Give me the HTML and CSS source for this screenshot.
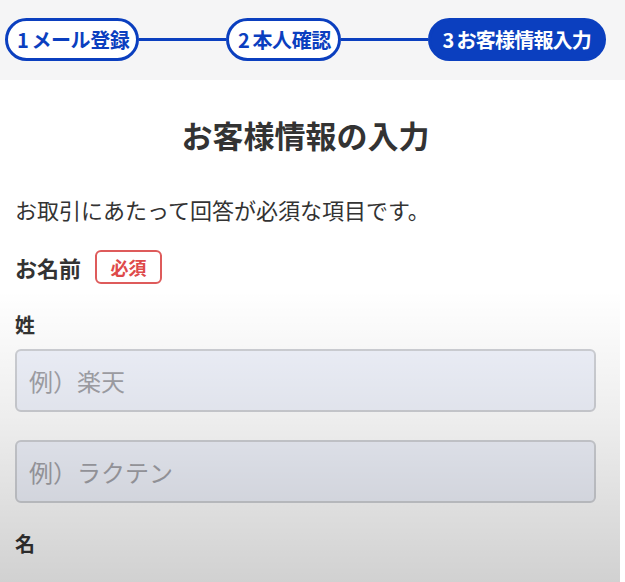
FILE: index.html
```html
<!DOCTYPE html>
<html lang="ja">
<head>
<meta charset="utf-8">
<link rel="stylesheet" href="styles.css">
</head>
<body>
<div class="page">
  <header class="steps">
    <div class="step"><span class="num">1</span>メール登録</div>
    <div class="line"></div>
    <div class="step"><span class="num">2</span>本人確認</div>
    <div class="line"></div>
    <div class="step active"><span class="num">3</span>お客様情報入力</div>
  </header>
  <main class="content">
    <h1 class="title">お客様情報の入力</h1>
    <p class="desc">お取引にあたって回答が必須な項目です。</p>
    <div class="group-head">
      <span class="group-label">お名前</span>
      <span class="badge">必須</span>
    </div>
    <div class="field-label">姓</div>
    <div class="input">例）楽天</div>
    <div class="input second">例）ラクテン</div>
    <div class="field-label last">名</div>
  </main>
  <div class="shade"></div>
</div>
</body>
</html>
```
FILE: styles.css
```css
* { box-sizing: border-box; }
html, body { margin: 0; padding: 0; }
body {
  width: 625px;
  height: 582px;
  overflow: hidden;
  background: #ffffff;
  font-family: "Noto Sans CJK JP", "Noto Sans", sans-serif;
  color: #333333;
}
.page { position: relative; height: 582px; overflow: hidden; }
.steps {
  height: 80px;
  background: #f5f5f6;
  display: flex;
  align-items: center;
  padding: 0 19px 2px 5px;
}
.step {
  height: 43px;
  border: 3px solid #0b3fbf;
  border-radius: 22px;
  background: #ffffff;
  color: #0b3fbf;
  font-weight: 700;
  font-size: 20px;
  line-height: 37px;
  padding: 0 7px 0 9px;
  white-space: nowrap;
  letter-spacing: -0.4px;
}
.num { margin-right: 3px; }
.step.active {
  background: #0b3fbf;
  color: #ffffff;
  padding: 0 12px;
  letter-spacing: -0.8px;
}
.line {
  flex: 1;
  height: 3px;
  background: #0b3fbf;
}
.content { padding: 0 29px 0 15px; }
.title {
  margin: 33px 0 0;
  text-align: center;
  font-size: 31px;
  line-height: 44px;
  font-weight: 700;
  color: #333333;
}
.desc {
  margin: 37px 0 0;
  font-size: 22px;
  line-height: 30px;
  color: #333333;
}
.group-head {
  margin-top: 26px;
  display: flex;
  align-items: center;
  gap: 14px;
  height: 34px;
}
.group-label { font-size: 22px; font-weight: 700; }
.badge {
  height: 34px;
  width: 67px;
  border: 2px solid #de5b5b;
  border-radius: 6px;
  color: #de4a4a;
  font-weight: 700;
  font-size: 18px;
  line-height: 30px;
  text-align: center;
}
.field-label {
  margin-top: 27px;
  font-size: 20px;
  line-height: 28px;
  font-weight: 700;
}
.field-label.last { margin-top: 27px; }
.input {
  margin-top: 10px;
  height: 63px;
  border: 2px solid #cfd1d6;
  border-radius: 6px;
  background: #f0f3fc;
  color: #a2a2a8;
  font-size: 24px;
  line-height: 59px;
  padding-left: 12px;
}
.input.second { margin-top: 28px; }
.shade {
  position: absolute;
  left: 0;
  top: 290px;
  width: 620px;
  height: 292px;
  background: linear-gradient(to bottom, rgba(0,0,0,0) 0%, rgba(0,0,0,0.07) 45%, rgba(0,0,0,0.18) 100%);
  pointer-events: none;
}
```
